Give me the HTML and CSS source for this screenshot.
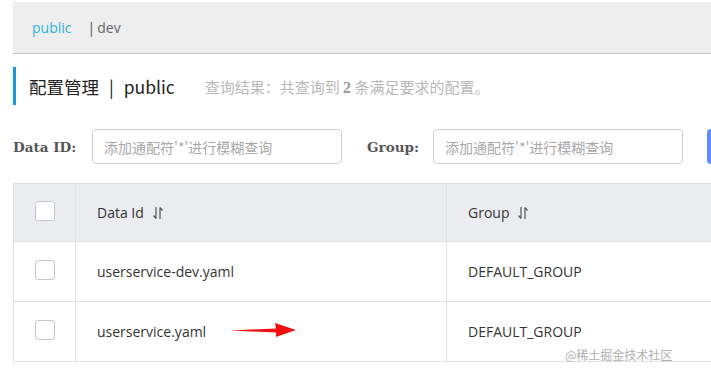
FILE: index.html
```html
<!DOCTYPE html>
<html lang="zh">
<head>
<meta charset="utf-8">
<link rel="stylesheet" href="styles.css">
</head>
<body>
<div class="page">
  <div class="ns-bar">
    <span class="ns-active">public</span>
    <span class="ns-sep">|</span>
    <span class="ns-item">dev</span>
  </div>
  <div class="title-row">
    <h1 class="title">配置管理<span class="title-sep">|</span>public</h1>
    <span class="summary">查询结果：共查询到 <b>2</b> 条满足要求的配置。</span>
  </div>
  <div class="search-row">
    <label class="s-label">Data ID:</label>
    <div class="s-input">添加通配符'*'进行模糊查询</div>
    <label class="s-label s-label-g">Group:</label>
    <div class="s-input">添加通配符'*'进行模糊查询</div>
    <div class="s-btn"></div>
  </div>
  <div class="table">
    <div class="tr th">
      <div class="td c-check"><span class="cb"></span></div>
      <div class="td c-id">Data Id <svg class="sort" viewBox="0 0 12 14" width="12" height="14"><path d="M4 1 V12.5 M4 12.5 L1.5 9.5" stroke="#555" stroke-width="1.2" fill="none"/><path d="M8 13 V1.5 M8 1.5 L10.5 4.5" stroke="#555" stroke-width="1.2" fill="none"/></svg></div>
      <div class="td c-group">Group <svg class="sort" viewBox="0 0 12 14" width="12" height="14"><path d="M4 1 V12.5 M4 12.5 L1.5 9.5" stroke="#555" stroke-width="1.2" fill="none"/><path d="M8 13 V1.5 M8 1.5 L10.5 4.5" stroke="#555" stroke-width="1.2" fill="none"/></svg></div>
    </div>
    <div class="tr">
      <div class="td c-check"><span class="cb"></span></div>
      <div class="td c-id">userservice-dev.yaml</div>
      <div class="td c-group">DEFAULT_GROUP</div>
    </div>
    <div class="tr">
      <div class="td c-check"><span class="cb"></span></div>
      <div class="td c-id">userservice.yaml</div>
      <div class="td c-group">DEFAULT_GROUP</div>
    </div>
  </div>
  <svg class="arrow" viewBox="0 0 70 20" width="70" height="20"><path d="M0 8.5 L46 6.5 L45 1 L66 8 L46 15 L46 10.5 Z" fill="#f01010"/></svg>
  <div class="watermark">@稀土掘金技术社区</div>
</div>
</body>
</html>
```

FILE: styles.css
```css
* { box-sizing: border-box; }
html, body { margin: 0; padding: 0; background: #fff; }
body {
  font-family: "Open Sans", "Noto Sans CJK SC", sans-serif;
  color: #333;
  width: 711px;
  height: 375px;
  overflow: hidden;
}
.page {
  position: relative;
  padding: 2px 0 0 13px;
  height: 375px;
}
.ns-bar {
  height: 52px;
  background: #eeeeee;
  border-bottom: 1px solid #c9c9c9;
  display: flex;
  align-items: center;
  padding: 0 0 0 19px;
  font-size: 14px;
  font-family: "Open Sans", "Noto Sans CJK SC", sans-serif;
}
.ns-active { color: #2ab4d3; }
.ns-sep { color: #555; margin-left: 16px; margin-right: 2px; }
.ns-item { color: #666; }
.title-row {
  margin-top: 13px;
  height: 38px;
  border-left: 3px solid #1a9ad2;
  display: flex;
  align-items: center;
  padding-left: 13px;
}
.title {
  margin: 0;
  font-weight: normal;
  font-size: 17.5px;
  color: #222;
  font-family: "Noto Sans CJK SC", sans-serif;
  flex-shrink: 0;
}
.title-sep { margin: 0 10px 0 10px; }
.summary {
  margin-left: 30px;
  font-size: 15px;
  color: #b8b8b8;
  font-family: "Noto Sans CJK SC", sans-serif;
  white-space: nowrap;
}
.summary b { color: #999; font-family: "Liberation Serif", serif; font-size: 16px; }
.search-row {
  margin-top: 24px;
  display: flex;
  align-items: center;
  height: 35px;
}
.s-label {
  font-family: "DejaVu Serif", serif;
  font-weight: bold;
  font-size: 13.5px;
  color: #555;
  width: 79px;
  flex-shrink: 0;
}
.s-label-g { margin-left: 25px; width: 66px; }
.s-input {
  width: 250px;
  flex-shrink: 0;
  height: 35px;
  border: 1px solid #cfcfcf;
  border-radius: 4px;
  padding-left: 11px;
  display: flex;
  align-items: center;
  font-size: 14px;
  color: #a8a8a8;
  font-family: "Noto Sans CJK SC", sans-serif;
}
.s-btn {
  margin-left: 24px;
  width: 30px;
  flex-shrink: 0;
  height: 35px;
  background: #5a8bff;
  border-radius: 4px;
}
.table {
  margin-top: 19px;
  border-bottom: 1px solid #e0e0e4;
  border-left: 1px solid #e0e0e4;
}
.tr {
  display: flex;
  height: 60px;
  border-top: 1px solid #e3e3e7;
}
.tr.th {
  height: 58px;
  background: #ebecf0;
  border-top: 1px solid #dedee2;
}
.td {
  display: flex;
  align-items: center;
  font-size: 14px;
  color: #333;
}
.c-check {
  width: 62px;
  border-right: 1px solid #e0e0e4;
  justify-content: center;
}
.c-id {
  width: 371px;
  border-right: 1px solid #e0e0e4;
  padding-left: 21px;
}
.c-group {
  flex: 1;
  padding-left: 21px;
}
.th .td { color: #333; }
.cb {
  width: 20px;
  height: 20px;
  border: 1px solid #c4c6cf;
  border-radius: 3px;
  background: #fff;
  margin-top: -3px;
}
.sort { margin-left: 8px; }
.arrow {
  position: absolute;
  left: 230px;
  top: 322px;
}
.watermark {
  position: absolute;
  left: 565px;
  top: 346px;
  font-size: 12px;
  color: #b0b0b0;
  font-family: "Noto Sans CJK SC", sans-serif;
}
```
